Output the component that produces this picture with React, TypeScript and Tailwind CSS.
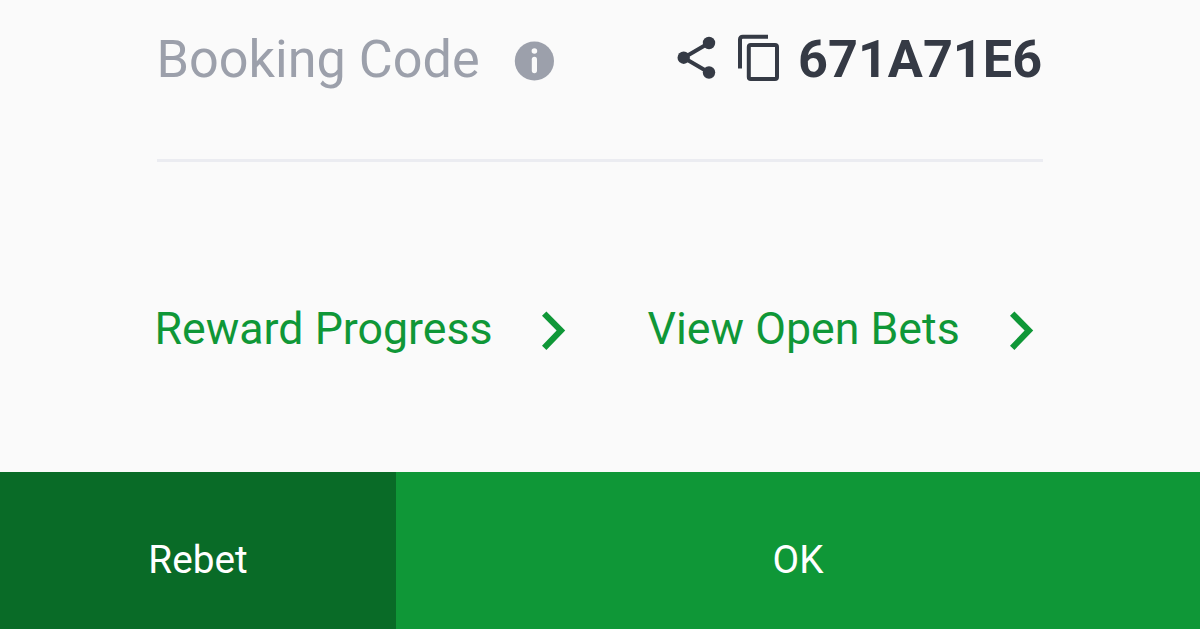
import React from 'react';

function Chevron() {
  return (
    <svg width="24" height="44" viewBox="0 0 24 44" fill="#0f9737">
      <path d="M4.4 4.4 L23.2 23.6 L4.4 43 L0 38.7 L14.6 23.6 L0 8.8 Z" />
    </svg>
  );
}

export default function App() {
  return (
    <main className="flex h-[629px] w-[1200px] flex-col overflow-hidden bg-[#fafafa] font-['Roboto',sans-serif]">
      <section className="mx-[157px] flex h-[162px] justify-between border-b-[3px] border-[#ebecf1] pt-[29px]">
        <div className="flex h-[63px] items-center text-[52.2px] leading-[62px] text-[#9ca0ab]">
          <span className="-ml-[0.5px] mb-[2px] w-[357.5px] whitespace-nowrap">Booking Code</span>
          <svg width="40" height="40" viewBox="0 0 40 40">
            <circle cx="20.4" cy="20" r="19.6" fill="#9ca0ab" />
            <circle cx="20.4" cy="10" r="2.8" fill="#fafafa" />
            <rect x="17.8" y="15.7" width="5.2" height="16.5" rx="2.6" fill="#fafafa" />
          </svg>
        </div>
        <div className="flex h-[62px] w-[367px] items-center text-[#353a45]">
          <svg className="mr-[21px] shrink-0" width="40" height="52" viewBox="0 0 40 52" fill="currentColor">
            <path d="M33 9 L7.7 23.7 L33 38.5" fill="none" stroke="currentColor" strokeWidth="4" />
            <circle cx="33" cy="9" r="6.2" />
            <circle cx="7.7" cy="23.7" r="6.2" />
            <circle cx="33" cy="38.5" r="6.2" />
          </svg>
          <svg className="mr-[19px] shrink-0" width="42" height="52" viewBox="0 0 42 52" fill="none" stroke="currentColor" strokeWidth="4">
            <path d="M3 34.5 V5.5 Q3 2.7 5.8 2.7 H31" />
            <rect x="11.8" y="11" width="28.2" height="34" rx="2" />
          </svg>
          <span className="whitespace-nowrap text-[52.2px] font-bold leading-[62px]">671A71E6</span>
        </div>
      </section>
      <section className="flex h-[310px] pl-[154.5px] pt-[140px] text-[44.7px] leading-[54px] text-[#0f9737]">
        <div className="flex h-[54px] w-[493px] items-center">
          <span className="w-[387.5px]">Reward Progress</span>
          <Chevron />
        </div>
        <div className="flex h-[54px] items-center">
          <span className="w-[362px]">View Open Bets</span>
          <Chevron />
        </div>
      </section>
      <footer className="flex h-[157px] text-[38.7px] text-white">
        <button className="w-[396px] bg-[#096b27] pt-[19px]">Rebet</button>
        <button className="flex-1 bg-[#0f9737] pt-[19px]">OK</button>
      </footer>
    </main>
  );
}
